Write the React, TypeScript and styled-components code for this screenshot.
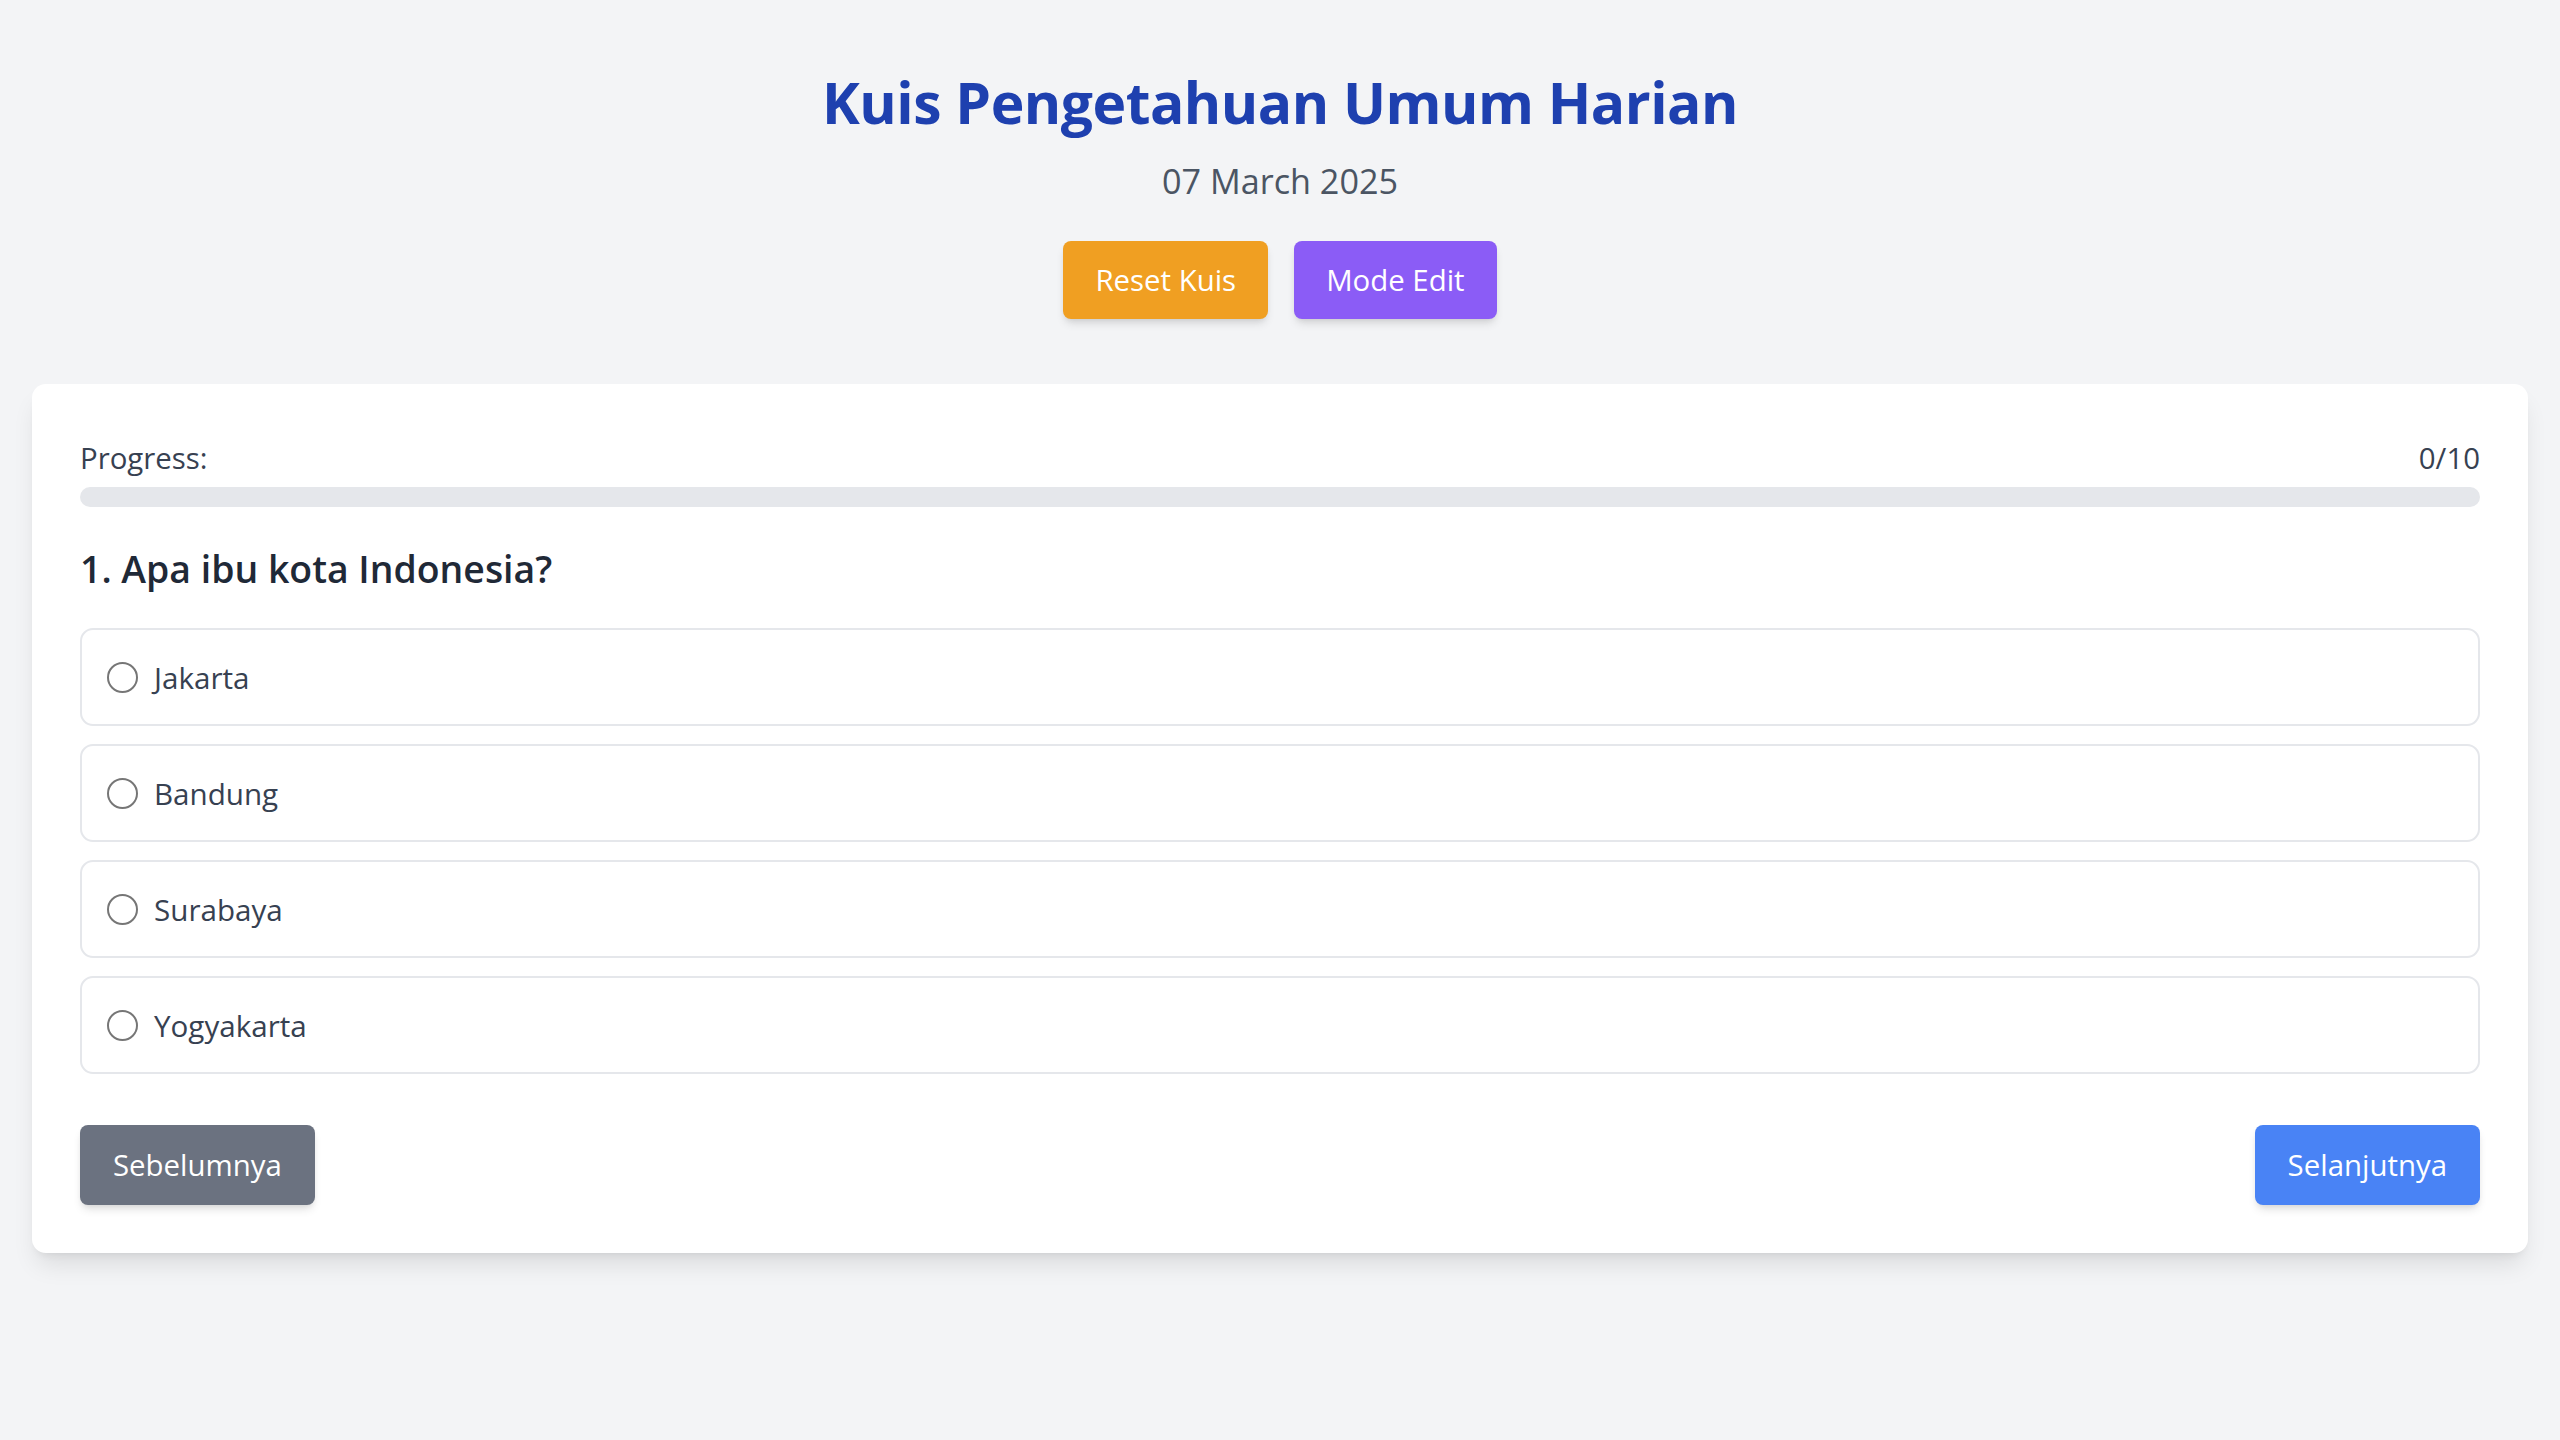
import React, { useState } from "react";
import styled, { createGlobalStyle } from "styled-components";

const GlobalStyle = createGlobalStyle`
  html, body {
    margin: 0;
    padding: 0;
    background: #f3f4f6;
    font-family: "Open Sans", "Noto Sans", sans-serif;
  }
  * { box-sizing: border-box; }
`;

const Page = styled.div`
  min-height: 1440px;
  padding: 70px 32px 32px;
  background: #f3f4f6;
`;

const Header = styled.header`
  display: flex;
  flex-direction: column;
  align-items: center;
`;

const Title = styled.h1`
  margin: 0;
  font-size: 57px;
  line-height: 65px;
  letter-spacing: -0.5px;
  font-weight: 700;
  color: #1e40af;
`;

const DateText = styled.p`
  margin: 23px 0 0;
  font-size: 34.2px;
  line-height: 46px;
  color: #4b5563;
`;

const ActionRow = styled.div`
  display: flex;
  gap: 26px;
  margin-top: 37px;
`;

const Button = styled.button<{ $bg: string }>`
  border: none;
  background: ${(p) => p.$bg};
  color: #ffffff;
  font-family: inherit;
  font-size: 29.4px;
  line-height: 46px;
  border-radius: 8px;
  padding: 16px 32px;
  box-shadow: 0 6px 10px -2px rgba(0, 0, 0, 0.12), 0 3px 6px -3px rgba(0, 0, 0, 0.1);
  cursor: pointer;
`;

const NavButton = styled(Button)`
  padding: 17px 33px;
`;

const Card = styled.main`
  margin-top: 65px;
  background: #ffffff;
  border-radius: 14px;
  padding: 48px;
  box-shadow: 0 16px 24px -5px rgba(0, 0, 0, 0.1), 0 6px 10px -6px rgba(0, 0, 0, 0.1);
`;

const ProgressRow = styled.div`
  display: flex;
  justify-content: space-between;
  padding-top: 3px;
  font-size: 29.4px;
  line-height: 46px;
  color: #374151;
`;

const Track = styled.div`
  margin-top: 6px;
  height: 20px;
  border-radius: 9999px;
  background: #e5e7eb;
  overflow: hidden;
`;

const Fill = styled.div`
  height: 100%;
  background: #3b82f6;
  border-radius: 9999px;
`;

const Question = styled.h2`
  margin: 39px 0 0;
  font-size: 37.4px;
  line-height: 46px;
  font-weight: 600;
  color: #1f2937;
`;

const OptionList = styled.div`
  margin-top: 36px;
  display: flex;
  flex-direction: column;
  gap: 18px;
`;

const OptionRow = styled.label`
  display: flex;
  align-items: center;
  height: 98px;
  padding: 0 25px;
  border: 2px solid #e5e7eb;
  border-radius: 13px;
  font-size: 29.6px;
  color: #374151;
  cursor: pointer;
`;

const Radio = styled.input`
  appearance: none;
  margin: 0 16px 0 0;
  width: 31px;
  height: 31px;
  border-radius: 50%;
  border: 2px solid #767676;
  background: #ffffff;
  flex-shrink: 0;
  &:checked {
    border-color: #3b82f6;
    box-shadow: inset 0 0 0 6px #ffffff;
    background: #3b82f6;
  }
`;

const NavRow = styled.div`
  margin-top: 51px;
  display: flex;
  justify-content: space-between;
`;

const options = ["Jakarta", "Bandung", "Surabaya", "Yogyakarta"];

export default function App() {
  const [selected, setSelected] = useState<string | null>(null);
  const answered = 0;
  const total = 10;
  return (
    <>
      <GlobalStyle />
      <Page>
        <Header>
          <Title>Kuis Pengetahuan Umum Harian</Title>
          <DateText>07 March 2025</DateText>
          <ActionRow>
            <Button $bg="#f09f22">Reset Kuis</Button>
            <Button $bg="#8b5cf6">Mode Edit</Button>
          </ActionRow>
        </Header>
        <Card>
          <ProgressRow>
            <span>Progress:</span>
            <span>
              {answered}/{total}
            </span>
          </ProgressRow>
          <Track>
            <Fill style={{ width: `${(answered / total) * 100}%` }} />
          </Track>
          <Question>1. Apa ibu kota Indonesia?</Question>
          <OptionList>
            {options.map((o) => (
              <OptionRow key={o}>
                <Radio
                  type="radio"
                  name="q1"
                  checked={selected === o}
                  onChange={() => setSelected(o)}
                />
                {o}
              </OptionRow>
            ))}
          </OptionList>
          <NavRow>
            <NavButton $bg="#6b7280">Sebelumnya</NavButton>
            <NavButton $bg="#4983f5">Selanjutnya</NavButton>
          </NavRow>
        </Card>
      </Page>
    </>
  );
}
